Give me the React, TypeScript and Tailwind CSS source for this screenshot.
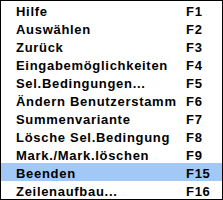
const items = [
  { label: 'Hilfe', key: 'F1' },
  { label: 'Auswählen', key: 'F2' },
  { label: 'Zurück', key: 'F3' },
  { label: 'Eingabemöglichkeiten', key: 'F4' },
  { label: 'Sel.Bedingungen...', key: 'F5' },
  { label: 'Ändern Benutzerstamm', key: 'F6' },
  { label: 'Summenvariante', key: 'F7' },
  { label: 'Lösche Sel.Bedingung', key: 'F8' },
  { label: 'Mark./Mark.löschen', key: 'F9' },
  { label: 'Beenden', key: 'F15' },
  { label: 'Zeilenaufbau...', key: 'F16' },
]

export default function App() {
  const selected = 9

  return (
    <div className="w-[223px] h-[200px] bg-white border border-black font-['Liberation_Sans',Arial,sans-serif] text-[13px] font-bold tracking-[0.7px] text-black">
      {items.map((item, i) => (
        <div
          key={item.key}
          className={`grid grid-cols-[170px_1fr] items-center h-[18px] pl-[15px] pt-[2px] leading-none ${
            i === selected ? 'bg-[#a2c9f5]' : ''
          }`}
        >
          <span className="whitespace-nowrap">{item.label}</span>
          <span>{item.key}</span>
        </div>
      ))}
    </div>
  )
}
